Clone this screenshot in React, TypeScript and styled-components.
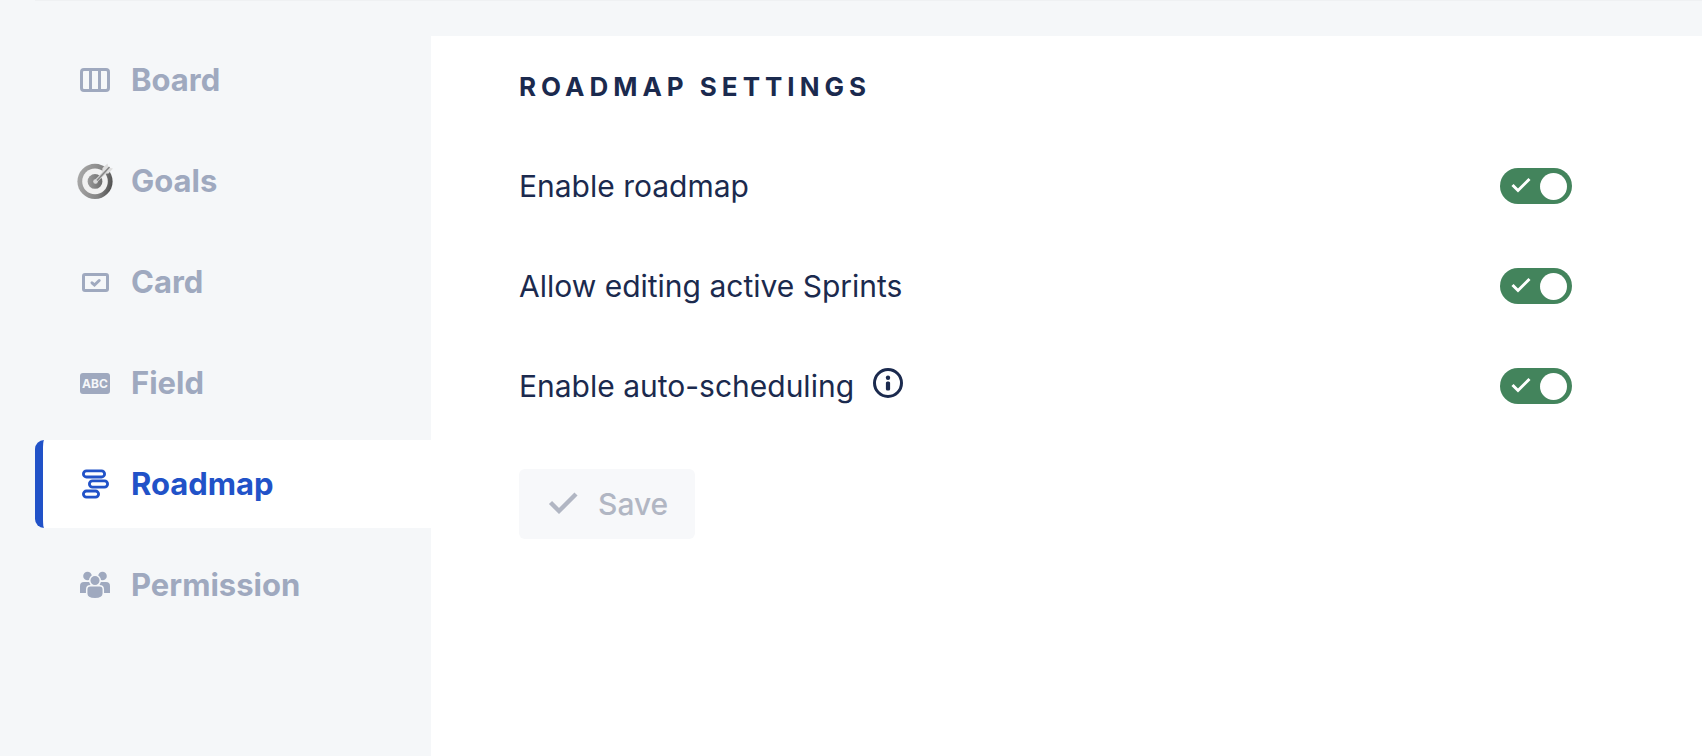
import React, { useState } from "react";
import styled, { createGlobalStyle } from "styled-components";

const color = {
  page: "#f5f7f9",
  panel: "#ffffff",
  line: "#eff1f3",
  muted: "#9fa9bf",
  accent: "#2152c8",
  text: "#1b2a4e",
  success: "#43845c",
  disabled: "#b1b6c3",
  disabledBg: "#f7f8fa",
};

const GlobalStyle = createGlobalStyle`
  *, *::before, *::after { box-sizing: border-box; }
  body {
    margin: 0;
    background: ${color.page};
    color: ${color.text};
    font-family: Inter, "Liberation Sans", sans-serif;
    font-size: 30px;
    line-height: 36px;
  }
`;

const Page = styled.div`
  display: flex;
  flex-direction: column;
  min-height: 100vh;
`;

const TopRule = styled.hr`
  width: calc(100% - 35px);
  height: 1px;
  margin: 0 0 0 35px;
  border: 0;
  background: ${color.line};
`;

const Layout = styled.div`
  display: flex;
  flex: 1;
  padding-top: 35px;
`;

const Sidebar = styled.nav`
  display: flex;
  flex: none;
  flex-direction: column;
  gap: 13px;
  width: 431px;
  padding-left: 35px;
`;

const NavLink = styled.a<{ $active?: boolean }>`
  display: flex;
  align-items: center;
  gap: 18px;
  height: 88px;
  padding: 0 34px;
  border-left: 8px solid ${(p) => (p.$active ? color.accent : "transparent")};
  border-radius: 9px 0 0 9px;
  background: ${(p) => (p.$active ? color.panel : "transparent")};
  color: ${(p) => (p.$active ? color.accent : color.muted)};
  font-size: 31px;
  font-weight: 700;
  text-decoration: none;
`;

const IconSlot = styled.span`
  display: flex;
  flex: none;
  align-items: center;
  justify-content: center;
  width: 36px;
  height: 36px;
`;

const AbcBadge = styled.span`
  width: 30px;
  height: 21px;
  border-radius: 3px;
  background: ${color.muted};
  color: ${color.page};
  font-size: 12px;
  font-weight: 700;
  line-height: 21px;
  text-align: center;
`;

const Panel = styled.main`
  flex: 1;
  padding: 33px 130px 32px 88px;
  background: ${color.panel};
`;

const Title = styled.h1`
  margin: 0;
  font-size: 26px;
  font-weight: 700;
  line-height: 36px;
  letter-spacing: 5px;
  text-transform: uppercase;
`;

const SettingList = styled.div`
  display: flex;
  flex-direction: column;
  gap: 64px;
  margin: 63px 0 65px;
`;

const SettingRow = styled.div`
  display: flex;
  align-items: center;
  justify-content: space-between;
`;

const SettingLabel = styled.div`
  display: flex;
  gap: 16px;
`;

const InfoButton = styled.button`
  display: flex;
  width: 36px;
  height: 30px;
  padding: 0;
  border: 0;
  background: none;
  color: inherit;
`;

const Switch = styled.span`
  position: relative;
  flex: none;
  width: 72px;
  height: 36px;
`;

const SwitchInput = styled.input`
  display: flex;
  align-items: center;
  width: 72px;
  height: 36px;
  margin: 0;
  padding: 0 5px;
  border-radius: 18px;
  background: #6b778c;
  appearance: none;
  cursor: pointer;

  &::after {
    width: 27px;
    height: 27px;
    border-radius: 50%;
    background: ${color.panel};
    content: "";
  }

  &:checked {
    justify-content: flex-end;
    background: ${color.success};
  }
`;

const SwitchMark = styled.svg`
  position: absolute;
  top: 8px;
  left: 10px;
  pointer-events: none;
`;

const SaveButton = styled.button`
  display: flex;
  align-items: center;
  gap: 17px;
  height: 70px;
  padding: 0 27px 0 26px;
  border: 0;
  border-radius: 6px;
  background: ${color.disabledBg};
  color: ${color.disabled};
  font: inherit;
  font-weight: 500;
`;

const BoardIcon = () => (
  <svg width="30" height="24" viewBox="0 0 30 24" fill="none" stroke="currentColor" aria-hidden="true">
    <rect x="1.5" y="1.5" width="27" height="21" rx="2.5" strokeWidth="3" />
    <path d="M10.5 1v22M19.5 1v22" strokeWidth="3" />
  </svg>
);

const GoalsIcon = () => (
  <svg width="36" height="36" viewBox="0 0 36 36" aria-hidden="true">
    <defs>
      <linearGradient id="goal-ring" x1="0" y1="0.4" x2="1" y2="0.6">
        <stop offset="0" stopColor="#a8a8a8" />
        <stop offset="0.65" stopColor="#858585" />
        <stop offset="1" stopColor="#505050" />
      </linearGradient>
      <linearGradient id="goal-center" x1="0" y1="0" x2="1" y2="0">
        <stop offset="0" stopColor="#9a9a9a" />
        <stop offset="1" stopColor="#6c6c6c" />
      </linearGradient>
    </defs>
    <circle cx="18" cy="18.4" r="17.6" fill="url(#goal-ring)" />
    <circle cx="18" cy="18.4" r="12.8" fill="#f1f1f1" />
    <circle cx="18" cy="18.4" r="7.4" fill="url(#goal-center)" />
    <path d="M25 11L25.500 5 30.500 0.500 31.500 4.500 36 5.500 31.500 10.500z" fill="#dedede" />
    <path d="M18.500 18.500L28 9" stroke="#d2d2d2" strokeWidth="3.200" strokeLinecap="round" />
    <circle cx="18.500" cy="18.500" r="2.300" fill="#d8d8d8" />
    <path d="M20 17.500L32.500 4" stroke="#858585" strokeWidth="1.500" />
  </svg>
);

const CardIcon = () => (
  <svg width="27" height="19" viewBox="0 0 27 19" fill="none" stroke="currentColor" strokeWidth="3" aria-hidden="true">
    <rect x="1.500" y="1.500" width="24" height="16" rx="1.500" />
    <path d="M10 9.800l2.500 2.200 4.700-4.500" strokeLinecap="round" />
  </svg>
);

const RoadmapIcon = () => (
  <svg width="27" height="30" viewBox="0 0 27 30" fill="none" stroke="currentColor" strokeWidth="2.800" aria-hidden="true">
    <rect x="1.400" y="1.800" width="21.200" height="6.200" rx="3.100" />
    <rect x="7.400" y="11.900" width="18.200" height="6.200" rx="3.100" />
    <rect x="1.400" y="22" width="15.200" height="6.200" rx="3.100" />
  </svg>
);

const PermissionIcon = () => (
  <svg width="30" height="28" viewBox="0 0 30 28" fill="currentColor" aria-hidden="true">
    <circle cx="7.500" cy="5" r="4.300" />
    <circle cx="22.500" cy="5" r="4.300" />
    <path d="M0 22v-7q0-4 4-4h6l2 11zM30 22v-7q0-4-4-4h-6l-2 11z" />
    <g stroke={color.page} strokeWidth="1.500">
      <circle cx="15" cy="9.500" r="5.300" />
      <path d="M6.700 18.500q0-3.700 3.700-3.700h9.200q3.700 0 3.700 3.700v4q0 5.200-8.300 5.200t-8.300-5.200z" />
    </g>
  </svg>
);

const InfoIcon = () => (
  <svg width="36" height="30" viewBox="0 0 36 30" aria-hidden="true">
    <circle cx="18" cy="15" r="13.500" fill="none" stroke="currentColor" strokeWidth="3" />
    <circle cx="18" cy="9.700" r="2.200" fill="currentColor" />
    <rect x="15.900" y="13.500" width="4.200" height="9" rx="1.500" fill="currentColor" />
  </svg>
);

const items = [
  { name: "Board", icon: <BoardIcon /> },
  { name: "Goals", icon: <GoalsIcon /> },
  { name: "Card", icon: <CardIcon /> },
  { name: "Field", icon: <AbcBadge aria-hidden="true">ABC</AbcBadge> },
  { name: "Roadmap", icon: <RoadmapIcon /> },
  { name: "Permission", icon: <PermissionIcon /> },
];

const settings = [
  { id: "enable-roadmap", label: "Enable roadmap" },
  { id: "edit-sprints", label: "Allow editing active Sprints" },
  { id: "auto-scheduling", label: "Enable auto-scheduling", info: true },
];

function Setting({ id, label, info }: { id: string; label: string; info?: boolean }) {
  const [on, setOn] = useState(true);
  return (
    <SettingRow>
      <SettingLabel>
        <label htmlFor={id}>{label}</label>
        {info && (
          <InfoButton type="button" aria-label="About auto-scheduling">
            <InfoIcon />
          </InfoButton>
        )}
      </SettingLabel>
      <Switch>
        <SwitchInput id={id} type="checkbox" role="switch" checked={on} onChange={(e) => setOn(e.target.checked)} />
        {on && (
          <SwitchMark width="22" height="18" viewBox="0 0 22 18" fill="none" stroke="#fff" strokeWidth="3" aria-hidden="true">
            <path d="M2.500 9l5.500 5.500L19.500 3" />
          </SwitchMark>
        )}
      </Switch>
    </SettingRow>
  );
}

export default function App() {
  return (
    <Page>
      <GlobalStyle />
      <TopRule />
      <Layout>
        <Sidebar aria-label="Settings">
          {items.map(({ name, icon }) => {
            const active = name === "Roadmap";
            return (
              <NavLink key={name} href={`#${name.toLowerCase()}`} $active={active} aria-current={active ? "page" : undefined}>
                <IconSlot>{icon}</IconSlot>
                {name}
              </NavLink>
            );
          })}
        </Sidebar>
        <Panel>
          <Title>Roadmap settings</Title>
          <SettingList>
            {settings.map((s) => (
              <Setting key={s.id} {...s} />
            ))}
          </SettingList>
          <SaveButton type="button" disabled>
            <svg width="36" height="28" viewBox="0 0 36 28" fill="none" stroke="currentColor" strokeWidth="4.400" aria-hidden="true">
              <path d="M5.500 12.500l8.500 8.500L31 4" />
            </svg>
            Save
          </SaveButton>
        </Panel>
      </Layout>
    </Page>
  );
}
